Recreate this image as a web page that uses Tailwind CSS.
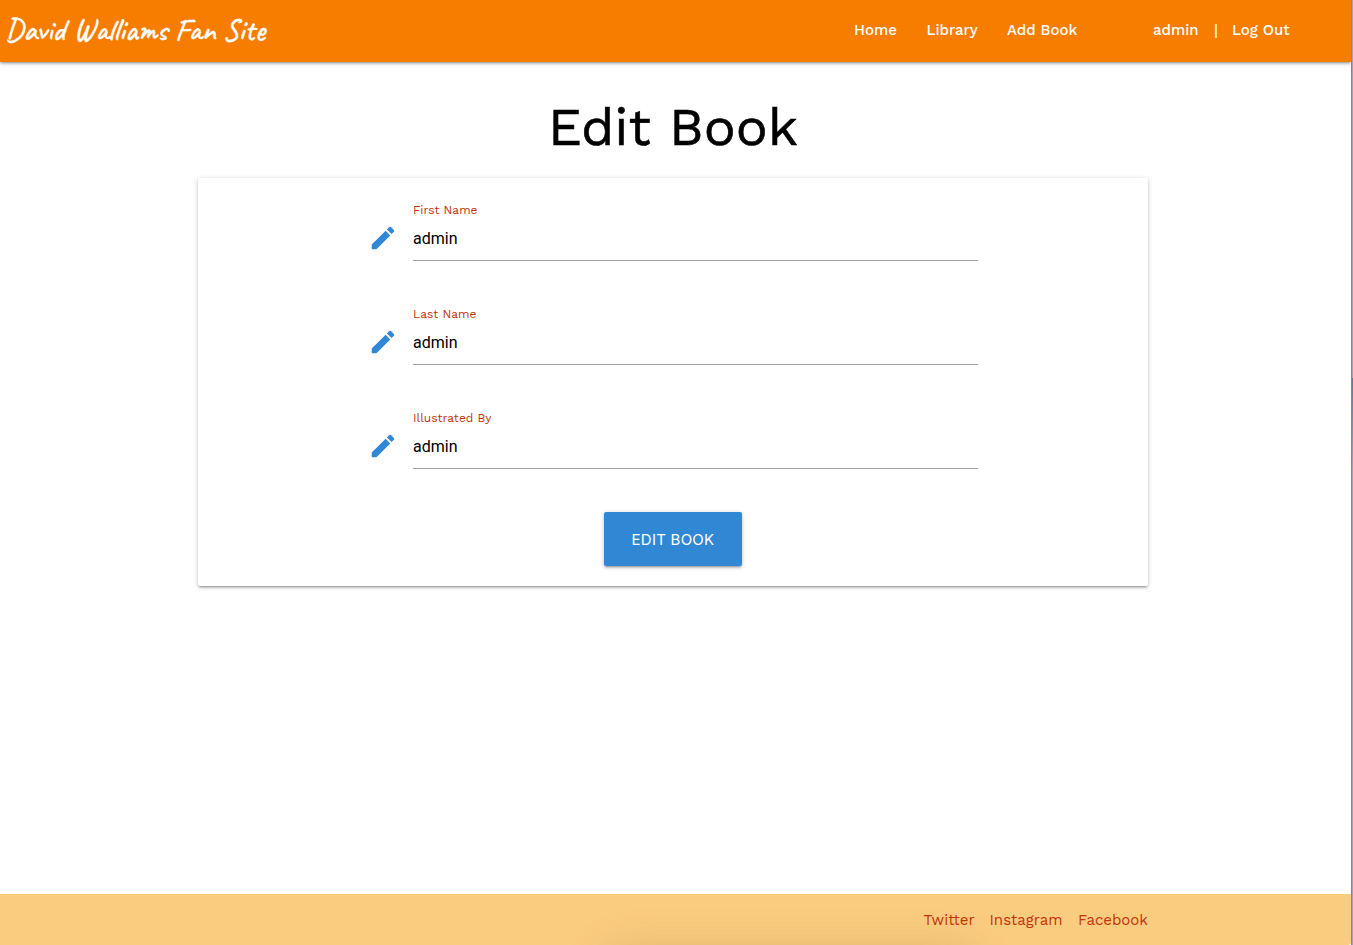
<!DOCTYPE html>
<html lang="en">
<head>
<meta charset="utf-8">
<title>David Walliams Fan Site</title>
<script src="https://cdn.jsdelivr.net/npm/@tailwindcss/browser@4"></script>
</head>
<body class="flex h-[945px] w-[1353px] overflow-hidden bg-white font-['Work_Sans','Inter',sans-serif] text-black">
<div class="flex w-[1351px] shrink-0 flex-col">
  <header class="flex h-[62px] shrink-0 items-center bg-[#f77d00] text-[15px] leading-[60px] font-medium text-white shadow-[0_2px_2px_0_rgba(0,0,0,0.14),0_3px_1px_-2px_rgba(0,0,0,0.12),0_1px_5px_0_rgba(0,0,0,0.2)]">
    <a class="ml-[5px] w-[849px] pb-[2px] font-['Caveat','Lato',cursive] text-[31.5px] leading-[60px] font-medium whitespace-nowrap [-webkit-text-stroke:0.6px_white]">David Walliams Fan Site</a>
    <nav class="flex h-[62px] whitespace-nowrap">
      <a class="w-[72.5px]">Home</a>
      <a class="w-[80.5px]">Library</a>
      <a class="w-[146px]">Add Book</a>
      <a class="w-[61px]">admin</a>
      <span class="w-[18px]">|</span>
      <a>Log Out</a>
    </nav>
  </header>
  <main class="flex grow flex-col items-center pr-[5px]">
    <h1 class="mt-[33px] h-[83px] text-[53.3px] leading-[64px] whitespace-nowrap [-webkit-text-stroke:0.6px_black]">Edit Book</h1>
    <form class="flex h-[408px] w-[950px] flex-col items-center rounded-[2px] bg-white shadow-[0_2px_2px_0_rgba(0,0,0,0.14),0_3px_1px_-2px_rgba(0,0,0,0.12),0_1px_5px_0_rgba(0,0,0,0.2)]">
      <div class="flex h-[104px] w-[611px] pt-[23px]">
        <svg class="mt-[22px] w-[30px] h-[30px] shrink-0 fill-[#3088d4]" viewBox="0 0 24 24"><path d="M3 17.25V21h3.75L17.81 9.94l-3.75-3.75L3 17.25zM20.71 7.04c.39-.39.39-1.02 0-1.41l-2.34-2.34c-.39-.39-1.02-.39-1.41 0l-1.83 1.83 3.75 3.75 1.83-1.83z"/></svg>
        <label class="ml-[15.5px] flex h-[60px] w-[565px] shrink-0 flex-col border-b border-[#9e9e9e]"><span class="text-[12px] leading-[18px] text-[#c1350b]">First Name</span><span class="mt-[6px] font-['Roboto'] text-[16px] leading-[27px]">admin</span></label>
      </div>
      <div class="flex h-[104px] w-[611px] pt-[23px]">
        <svg class="mt-[22px] w-[30px] h-[30px] shrink-0 fill-[#3088d4]" viewBox="0 0 24 24"><path d="M3 17.25V21h3.75L17.81 9.94l-3.75-3.75L3 17.25zM20.71 7.04c.39-.39.39-1.02 0-1.41l-2.34-2.34c-.39-.39-1.02-.39-1.41 0l-1.83 1.83 3.75 3.75 1.83-1.83z"/></svg>
        <label class="ml-[15.5px] flex h-[60px] w-[565px] shrink-0 flex-col border-b border-[#9e9e9e]"><span class="text-[12px] leading-[18px] text-[#c1350b]">Last Name</span><span class="mt-[6px] font-['Roboto'] text-[16px] leading-[27px]">admin</span></label>
      </div>
      <div class="flex h-[104px] w-[611px] pt-[23px]">
        <svg class="mt-[22px] w-[30px] h-[30px] shrink-0 fill-[#3088d4]" viewBox="0 0 24 24"><path d="M3 17.25V21h3.75L17.81 9.94l-3.75-3.75L3 17.25zM20.71 7.04c.39-.39.39-1.02 0-1.41l-2.34-2.34c-.39-.39-1.02-.39-1.41 0l-1.83 1.83 3.75 3.75 1.83-1.83z"/></svg>
        <label class="ml-[15.5px] flex h-[60px] w-[565px] shrink-0 flex-col border-b border-[#9e9e9e]"><span class="text-[12px] leading-[18px] text-[#c1350b]">Illustrated By</span><span class="mt-[6px] font-['Roboto'] text-[16px] leading-[27px]">admin</span></label>
      </div>
      <button type="button" class="mt-[22px] h-[54px] w-[138px] rounded-[2px] bg-[#3088d4] pt-px font-['Inter'] text-[15px] leading-[54px] tracking-[0.25px] text-white shadow-[0_2px_2px_0_rgba(0,0,0,0.14),0_3px_1px_-2px_rgba(0,0,0,0.12),0_1px_5px_0_rgba(0,0,0,0.2)]">EDIT BOOK</button>
    </form>
  </main>
  <footer class="relative flex h-[51px] shrink-0 overflow-hidden rounded-br-[3px] bg-[#facc7f] pl-[923.5px] text-[15px] leading-[52px] text-[#c1350b]">
    <div class="absolute top-[68px] left-[615px] h-[20px] w-[350px] rounded-full shadow-[0_0_40px_12px_rgba(120,90,50,0.22)]"></div>
    <a class="w-[66px]">Twitter</a>
    <a class="w-[88.5px]">Instagram</a>
    <a>Facebook</a>
  </footer>
</div>
<div class="w-[2px] shrink-0 border-l border-[#8f7f99] bg-linear-to-b from-[#b59bb5] from-40% via-[#64779f] via-40% to-[#b59bb5] to-50%"></div>
</body>
</html>
